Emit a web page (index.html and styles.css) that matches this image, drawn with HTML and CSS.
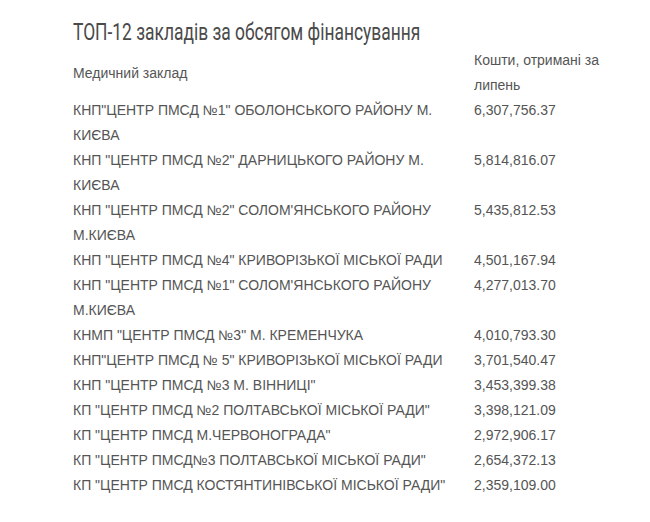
FILE: index.html
```html
<!DOCTYPE html>
<html lang="uk">
<head>
<meta charset="utf-8">
<link rel="stylesheet" href="styles.css">
</head>
<body>
<div class="page">
  <h2 class="title"><span class="title-text">ТОП-12 закладів за обсягом фінансування</span></h2>
  <table class="top-table">
    <thead>
      <tr><th class="col-name">Медичний заклад</th><th class="col-sum">Кошти, отримані за липень</th></tr>
    </thead>
    <tbody>
      <tr><td>КНП"ЦЕНТР ПМСД №1" ОБОЛОНСЬКОГО РАЙОНУ М. КИЄВА</td><td>6,307,756.37</td></tr>
      <tr><td>КНП "ЦЕНТР ПМСД №2" ДАРНИЦЬКОГО РАЙОНУ М. КИЄВА</td><td>5,814,816.07</td></tr>
      <tr><td>КНП "ЦЕНТР ПМСД №2" СОЛОМ'ЯНСЬКОГО РАЙОНУ М.КИЄВА</td><td>5,435,812.53</td></tr>
      <tr><td>КНП "ЦЕНТР ПМСД №4" КРИВОРІЗЬКОЇ МІСЬКОЇ РАДИ</td><td>4,501,167.94</td></tr>
      <tr><td>КНП "ЦЕНТР ПМСД №1" СОЛОМ'ЯНСЬКОГО РАЙОНУ М.КИЄВА</td><td>4,277,013.70</td></tr>
      <tr><td>КНМП "ЦЕНТР ПМСД №3" М. КРЕМЕНЧУКА</td><td>4,010,793.30</td></tr>
      <tr><td>КНП"ЦЕНТР ПМСД № 5" КРИВОРІЗЬКОЇ МІСЬКОЇ РАДИ</td><td>3,701,540.47</td></tr>
      <tr><td>КНП "ЦЕНТР ПМСД №3 М. ВІННИЦІ"</td><td>3,453,399.38</td></tr>
      <tr><td>КП "ЦЕНТР ПМСД №2 ПОЛТАВСЬКОЇ МІСЬКОЇ РАДИ"</td><td>3,398,121.09</td></tr>
      <tr><td>КП "ЦЕНТР ПМСД М.ЧЕРВОНОГРАДА"</td><td>2,972,906.17</td></tr>
      <tr><td>КП "ЦЕНТР ПМСД№3 ПОЛТАВСЬКОЇ МІСЬКОЇ РАДИ"</td><td>2,654,372.13</td></tr>
      <tr><td>КП "ЦЕНТР ПМСД КОСТЯНТИНІВСЬКОЇ МІСЬКОЇ РАДИ"</td><td>2,359,109.00</td></tr>
    </tbody>
  </table>
</div>
</body>
</html>
```
FILE: styles.css
```css
html, body {
  margin: 0;
  padding: 0;
  background: #fff;
}
.page {
  padding: 17px 0 0 73px;
  font-family: "Liberation Sans", Arial, sans-serif;
  color: #555;
}
.title {
  margin: 0 0 1px 0;
  font-family: Roboto, "Liberation Sans", sans-serif;
  font-weight: 400;
  font-size: 24px;
  line-height: 30px;
  color: #4a4a4a;
  white-space: nowrap;
}
.title-text {
  display: inline-block;
  transform: scaleX(0.725);
  transform-origin: left center;
}
.top-table {
  border-collapse: collapse;
  font-size: 14px;
  line-height: 25px;
}
.top-table th {
  font-weight: 400;
  text-align: left;
  vertical-align: middle;
  padding: 0;
}
.top-table td {
  padding: 0;
  vertical-align: top;
}
.col-name {
  width: 391px;
  padding-right: 10px !important;
}
.top-table td:first-child {
  padding-right: 10px;
}
.col-sum {
  width: 140px;
}
```
